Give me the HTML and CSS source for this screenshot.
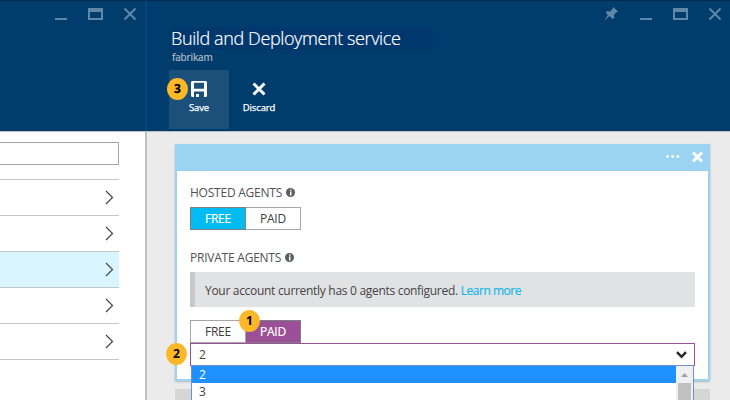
FILE: index.html
```html
<!DOCTYPE html>
<html lang="en">
<head>
<meta charset="utf-8">
<title>Build and Deployment service</title>
<link rel="stylesheet" href="styles.css">
</head>
<body>
<div class="portal">
  <section class="blade blade-list">
    <header class="blade-header">
      <div class="window-controls">
        <svg width="83" height="14" viewBox="0 0 83 14"><path class="bar" d="M0 11h12v2H0z"/><path class="bar" fill-rule="evenodd" d="M33 1h15v12H33zM35 5v6h11V5z"/><path class="cross" d="M69.500 1.500l11 11M80.500 1.500l-11 11"/></svg>
      </div>
    </header>
    <div class="list-body">
      <div class="search"></div>
      <ul class="rows">
        <li><svg width="9" height="15" viewBox="0 0 9 15"><path d="M1 1l6.500 6.500L1 14"/></svg></li>
        <li><svg width="9" height="15" viewBox="0 0 9 15"><path d="M1 1l6.500 6.500L1 14"/></svg></li>
        <li class="selected"><svg width="9" height="15" viewBox="0 0 9 15"><path d="M1 1l6.500 6.500L1 14"/></svg></li>
        <li><svg width="9" height="15" viewBox="0 0 9 15"><path d="M1 1l6.500 6.500L1 14"/></svg></li>
        <li><svg width="9" height="15" viewBox="0 0 9 15"><path d="M1 1l6.500 6.500L1 14"/></svg></li>
      </ul>
    </div>
  </section>

  <section class="blade blade-detail">
    <header class="blade-header">
      <div class="window-controls">
        <svg width="118" height="14" viewBox="0 0 118 14"><path class="bar" d="M9 0l5 4.500-1.500.8-2.500 2.500.2 3.200-1.700 1-3-3L0 14l3.800-5.800L1.800 5.500l1-1.300 3.200.2 2.500-2.500z"/><path class="bar" d="M36 11h12v2H36z"/><path class="bar" fill-rule="evenodd" d="M69 1h15v12H69zM71 5v6h11V5z"/><path class="cross" d="M105.500 1.500l11 11M116.500 1.500l-11 11"/></svg>
      </div>
      <h1><span>Build and Deployment service</span></h1>
      <p class="subtitle"><span>fabrikam</span></p>
      <nav class="commands">
        <div class="command active">
          <svg width="16" height="16" viewBox="0 0 16 16"><path fill-rule="evenodd" d="M1 0h14l1 1v14l-1 1h-2v-5.500H3V16H1l-1-1V1zM3 1.800v6h10v-6z"/><path d="M5 13h3v3H5z"/></svg>
          <span>Save</span>
          <b class="badge badge-3">3</b>
        </div>
        <div class="command">
          <svg width="16" height="16" viewBox="0 0 16 16"><path class="thick" d="M2.500 2.500l11 11M13.500 2.500l-11 11"/></svg>
          <span>Discard</span>
        </div>
      </nav>
    </header>
    <main class="detail-body">
      <article class="card">
        <div class="card-bar">
          <svg width="38" height="12" viewBox="0 0 38 12"><circle cx="1.500" cy="5.500" r="1.400"/><circle cx="6.700" cy="5.500" r="1.400"/><circle cx="11.900" cy="5.500" r="1.400"/><path class="thick" d="M27 1.500l9 9M36 1.500l-9 9"/></svg>
        </div>
        <div class="card-content">
          <div class="label"><span>HOSTED AGENTS</span><svg width="9" height="9" viewBox="0 0 9 9"><circle cx="4.500" cy="4.500" r="4.500"/><path d="M4 1.500h1.500v1.300H4zM4 3.600h1.500v3.800H4z"/></svg></div>
          <div class="toggle">
            <div class="choice blue">FREE</div><div class="choice">PAID</div>
          </div>
          <div class="label label-private"><span>PRIVATE AGENTS</span><svg width="9" height="9" viewBox="0 0 9 9"><circle cx="4.500" cy="4.500" r="4.500"/><path d="M4 1.500h1.500v1.300H4zM4 3.600h1.500v3.800H4z"/></svg></div>
          <div class="notice"><span class="message">Your account currently has 0 agents configured.</span><a class="learn">Learn more</a></div>
          <div class="toggle toggle-private">
            <div class="choice">FREE</div><div class="choice purple">PAID</div>
            <b class="badge badge-1">1</b>
          </div>
          <div class="select">
            <span>2</span>
            <svg width="11" height="8" viewBox="0 0 11 8"><path d="M1 1.200l4.500 4.600L10 1.200"/></svg>
            <b class="badge badge-2">2</b>
            <div class="menu">
              <div class="options"><div class="option chosen">2</div><div class="option">3</div></div>
              <div class="scrollbar"><svg width="7" height="4" viewBox="0 0 7 4"><path d="M0 4L3.500 0 7 4z"/></svg><i class="thumb"></i></div>
            </div>
          </div>
        </div>
      </article>
      <div class="next-tile"></div>
    </main>
  </section>
</div>
</body>
</html>
```
FILE: styles.css
```css
* { box-sizing: border-box; }
body { margin: 0; font: 12px/16px "Open Sans", "Noto Sans", sans-serif; color: #444; }
svg { display: block; flex: none; }
h1, p, ul { margin: 0; padding: 0; font-weight: 400; }
span, a { white-space: nowrap; }

.portal { display: flex; width: 730px; height: 400px; overflow: hidden; background: #fff; }
.blade-list { width: 147px; border-right: 2px solid #bfc0c2; flex: none; }
.blade-detail { flex: 1; background: #ebebeb; }
.blade-header { height: 131px; background: #003c6c; border-top: 1px solid #002b50; }
.blade-list .blade-header { width: 147px; border-right: 2px solid #004680; }
.window-controls { display: flex; justify-content: flex-end; padding: 6px 8px 0 0; }
.blade-list .window-controls { padding-right: 7px; }
.window-controls .bar { fill: #5f87a8; }
.window-controls .cross { stroke: #5f87a8; stroke-width: 2; }

.list-body { border-top: 1px solid #b9bdc2; padding-top: 10px; }
.search { width: 119px; height: 23px; border: 1px solid #a5a5a8; border-left: 0; }
.rows { width: 119px; margin-top: 14px; border-top: 1px solid #c4c5c7; list-style: none; }
.rows li { display: flex; align-items: center; justify-content: flex-end; height: 36px; padding-right: 5px; border-bottom: 1px solid #c4c5c7; }
.rows path { fill: none; stroke: #45454b; stroke-width: 1.200; }
.rows .selected { background: #d9f5ff; }

h1 { height: 23px; margin: 6px 0 0 22px; padding-left: 2px; width: 264px; background: #00386e; color: #fff; font-size: 18px; font-weight: 300; line-height: 23px; letter-spacing: -0.390px; -webkit-text-stroke: 0.200px; }
.subtitle { height: 14px; padding-left: 25px; font-size: 10px; line-height: 14px; letter-spacing: -0.150px; color: #b3bdc6; -webkit-text-stroke: 0.200px; }
.commands { display: flex; margin: 6px 0 0 22px; }
.command { position: relative; display: flex; flex-direction: column; align-items: center; width: 60px; height: 60px; padding-top: 11px; color: #fff; font-size: 9.500px; line-height: 14px; letter-spacing: -0.100px; -webkit-text-stroke: 0.250px; }
.command.active { background: #1b507a; height: 59px; }
.command svg { margin-bottom: 4px; fill: #fff; }
.thick { stroke: #fff; stroke-width: 3; fill: none; }

.badge { position: absolute; width: 21px; height: 22px; border-radius: 50%; background: #fdb827; color: #000; font: 700 12px/22px "Open Sans", "Noto Sans", sans-serif; text-align: center; }
.badge-3 { left: -2px; top: 8px; }
.badge-1 { left: 49px; top: -10px; }
.badge-2 { left: -25px; top: -1px; }

.detail-body { height: 269px; border-top: 1px solid #bcbdc0; padding: 12px 20px 0 28px; }
.card { height: 237px; background: #fff; border: 2px solid #9bd4f3; border-top: 0; box-shadow: 0 1px 2px #b5b5b5; }
.card-bar { display: flex; align-items: center; justify-content: flex-end; height: 27px; margin: 0 -2px; padding-right: 6px; background: #9bd4f3; }
.card-bar svg { fill: #fff; margin-bottom: 1px; }
.card-content { padding: 14px 13px 0; }
.label { display: flex; align-items: center; gap: 4px; height: 16px; color: #505156; letter-spacing: -0.230px; }
.label svg { margin-bottom: 1px; }
.label circle { fill: #5b5e63; }
.label path { fill: #fff; }
.toggle { position: relative; display: flex; width: 111px; height: 23px; margin-top: 6px; }
.choice { width: 55px; line-height: 21px; text-align: center; color: #3c3d42; letter-spacing: -0.200px; border: 1px solid #a5a6a8; border-left: 0; }
.choice:first-child { width: 56px; border-left: 1px solid #a5a6a8; }
.toggle .blue { background: #00bcf2; color: #fff; border-color: #7d7f83; -webkit-text-stroke: 0.200px; }
.toggle .purple { background: #9b4f96; color: #fff; border-color: #7d7f83; -webkit-text-stroke: 0.200px; }
.label-private { margin-top: 20px; }
.notice { display: flex; align-items: center; gap: 3px; height: 35px; margin-top: 6px; padding: 3px 0 0 10px; border-left: 5px solid #c8c8c9; background: #e1e2e4; }
.message { letter-spacing: -0.300px; }
.learn { color: #18b7eb; letter-spacing: -0.480px; -webkit-text-stroke: 0.200px; }
.toggle-private { margin-top: 13px; }
.select { position: relative; display: flex; justify-content: space-between; align-items: center; height: 23px; padding: 0 7px 0 8px; border: 1px solid #9b4f96; background: #fff; }
.select > svg path { fill: none; stroke: #26272b; stroke-width: 2.500; }
.menu { position: absolute; left: 0; top: 21px; display: flex; width: 503px; height: 60px; border: 1px solid #6f8fd0; background: #fff; }
.options { flex: 1; }
.option { height: 17px; padding-left: 7px; line-height: 17px; }
.chosen { background: #1e90ff; color: #fff; }
.scrollbar { display: flex; flex-direction: column; align-items: center; width: 17px; padding-top: 7px; background: #f0f0f0; }
.scrollbar path { fill: #a3a3a3; }
.thumb { width: 13px; height: 45px; margin-top: 6px; background: #c1c1c1; flex: none; }
.next-tile { height: 20px; margin-top: 8px; background: #d6d6d6; }
```
